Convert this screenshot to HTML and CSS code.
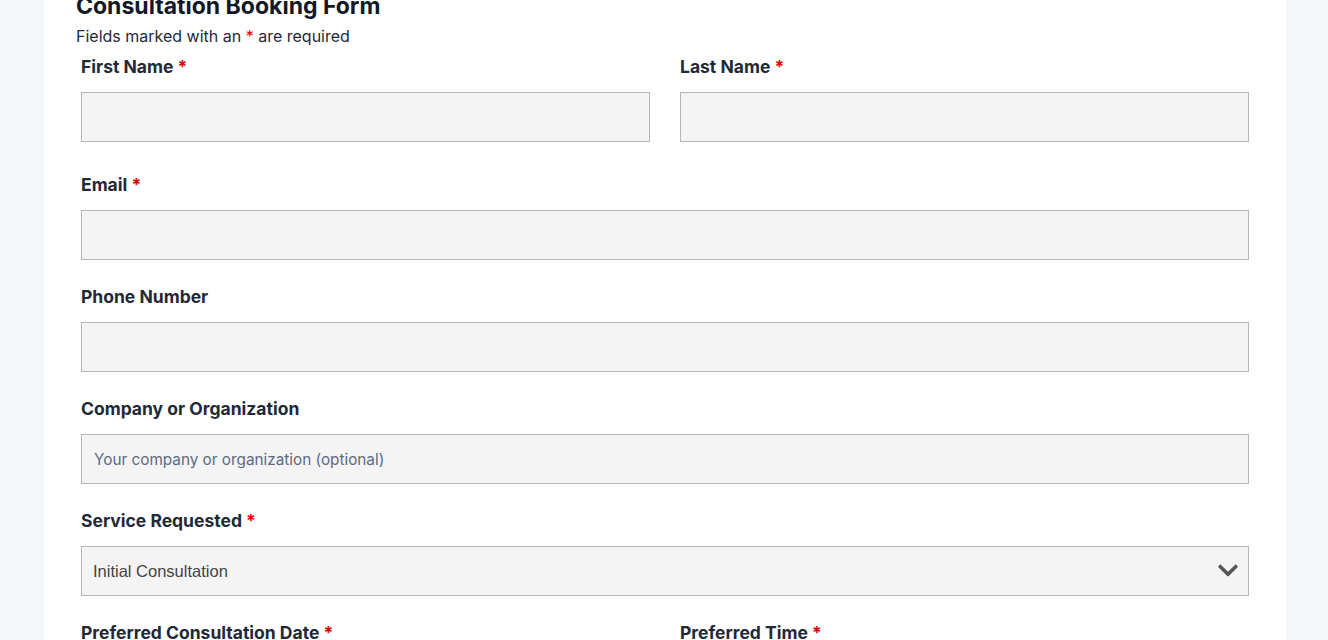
FILE: index.html
```html
<!DOCTYPE html>
<html lang="en">
<head>
    <meta charset="UTF-8">
    <meta name="viewport" content="width=device-width, initial-scale=1.0">
    <title>Consultation Booking Form</title>
    <link rel="stylesheet" href="styles.css">
</head>
<body>
    <div class="container">
        <h2>Consultation Booking Form</h2>
        <p class="note">Fields marked with an <span class="req">*</span> are required</p>
        <form id="bookingForm">
            <div class="row">
                <div class="field">
                    <label for="firstName">First Name <span class="req">*</span></label>
                    <input type="text" id="firstName" name="firstName">
                </div>
                <div class="field">
                    <label for="lastName">Last Name <span class="req">*</span></label>
                    <input type="text" id="lastName" name="lastName">
                </div>
            </div>

            <div class="field">
                <label for="email">Email <span class="req">*</span></label>
                <input type="email" id="email" name="email">
            </div>

            <div class="field">
                <label for="phone">Phone Number</label>
                <input type="text" id="phone" name="phone">
            </div>

            <div class="field">
                <label for="company">Company or Organization</label>
                <input type="text" id="company" name="company" placeholder="Your company or organization (optional)">
            </div>

            <div class="field">
                <label for="service">Service Requested <span class="req">*</span></label>
                <div class="select-wrap">
                    <select id="service" name="service">
                        <option>Initial Consultation</option>
                        <option>Follow-up Session</option>
                        <option>Strategy Review</option>
                    </select>
                    <svg class="chevron" viewBox="0 0 448 512" width="20" height="23" aria-hidden="true">
                        <path d="M207.029 381.476L12.686 187.132c-9.373-9.373-9.373-24.569 0-33.941l22.667-22.667c9.357-9.357 24.522-9.375 33.901-.04L224 284.505l154.745-154.021c9.379-9.335 24.544-9.317 33.901.04l22.667 22.667c9.373 9.373 9.373 24.569 0 33.941L240.971 381.476c-9.373 9.372-24.569 9.372-33.942 0z"/>
                    </svg>
                </div>
            </div>

            <div class="row">
                <div class="field">
                    <label for="date">Preferred Consultation Date <span class="req">*</span></label>
                    <input type="text" id="date" name="date">
                </div>
                <div class="field">
                    <label for="time">Preferred Time <span class="req">*</span></label>
                    <input type="text" id="time" name="time">
                </div>
            </div>
        </form>
    </div>
</body>
</html>
```

FILE: styles.css
```css
body {
    margin: 0;
    font-family: Inter, "Open Sans", sans-serif;
    background-color: #f4f7fa;
    color: #1f2937;
}
.container {
    width: 1242px;
    margin: -9px 0 0 44px;
    padding: 0 32px 40px;
    box-sizing: border-box;
    background-color: white;
}
h2 {
    margin: 0;
    font-size: 23px;
    line-height: 30px;
    font-weight: 700;
    color: #111827;
}
.note {
    margin: 3px 0 6px;
    font-size: 16px;
    line-height: 24px;
    color: #1f2937;
}
.req {
    color: #e00000;
}
form {
    padding: 0 5px;
}
.row {
    display: grid;
    grid-template-columns: 1fr 1fr;
    gap: 30px;
    margin-bottom: 6px;
}
.field {
    margin-bottom: 24px;
}
label {
    display: block;
    font-size: 17.5px;
    line-height: 26px;
    font-weight: 700;
    color: #1f2937;
    margin-bottom: 12px;
}
input[type="text"], input[type="email"], select {
    display: block;
    width: 100%;
    height: 50px;
    box-sizing: border-box;
    padding: 0 12px;
    border: 1px solid #b5b5b5;
    border-radius: 0;
    background-color: #f4f4f4;
    font-family: Inter, "Open Sans", sans-serif;
    font-size: 15.3px;
    color: #333;
    outline: none;
}
input::placeholder {
    color: #5b6b84;
}
.select-wrap {
    position: relative;
}
select {
    appearance: none;
    -webkit-appearance: none;
    padding-left: 11px;
    font-family: "Liberation Sans", Arial, sans-serif;
    font-size: 16.5px;
    color: #444;
}
.chevron {
    position: absolute;
    right: 11px;
    top: 13px;
    fill: #555;
    pointer-events: none;
}
```
